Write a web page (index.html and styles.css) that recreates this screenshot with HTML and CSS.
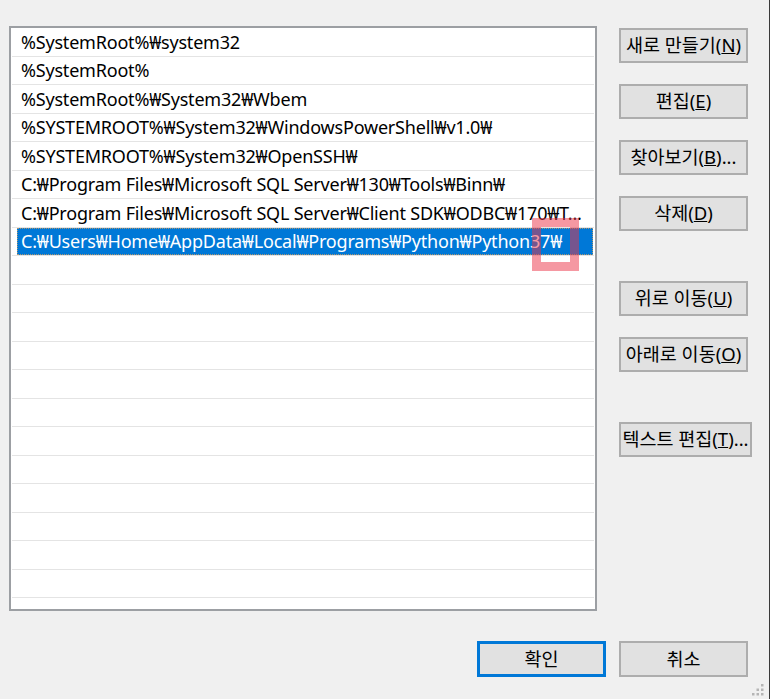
FILE: index.html
```html
<!DOCTYPE html>
<html lang="ko">
<head>
<meta charset="utf-8">
<title>환경 변수 편집</title>
<link rel="stylesheet" href="styles.css">
</head>
<body>
<div class="window">
  <div class="main">
    <div class="listbox">
      <div class="row"><span class="label">%SystemRoot%₩system32</span></div>
      <div class="row"><span class="label">%SystemRoot%</span></div>
      <div class="row"><span class="label">%SystemRoot%₩System32₩Wbem</span></div>
      <div class="row"><span class="label">%SYSTEMROOT%₩System32₩WindowsPowerShell₩v1.0₩</span></div>
      <div class="row"><span class="label">%SYSTEMROOT%₩System32₩OpenSSH₩</span></div>
      <div class="row"><span class="label">C:₩Program Files₩Microsoft SQL Server₩130₩Tools₩Binn₩</span></div>
      <div class="row"><span class="label">C:₩Program Files₩Microsoft SQL Server₩Client SDK₩ODBC₩170₩T...</span></div>
      <div class="row selected"><span class="label">C:₩Users₩Home₩AppData₩Local₩Programs₩Python₩Python37₩</span></div>
      <div class="row"><span class="label"></span></div>
      <div class="row"><span class="label"></span></div>
      <div class="row"><span class="label"></span></div>
      <div class="row"><span class="label"></span></div>
      <div class="row"><span class="label"></span></div>
      <div class="row"><span class="label"></span></div>
      <div class="row"><span class="label"></span></div>
      <div class="row"><span class="label"></span></div>
      <div class="row"><span class="label"></span></div>
      <div class="row"><span class="label"></span></div>
      <div class="row"><span class="label"></span></div>
      <div class="row"><span class="label"></span></div>
      <div class="row"><span class="label"></span></div>
      <div class="marker"></div>
    </div>
    <div class="side">
      <div class="group">
        <button class="btn">새로 만들기(<u>N</u>)</button>
        <button class="btn">편집(<u>E</u>)</button>
        <button class="btn">찾아보기(<u>B</u>)...</button>
        <button class="btn">삭제(<u>D</u>)</button>
      </div>
      <div class="group">
        <button class="btn">위로 이동(<u>U</u>)</button>
        <button class="btn">아래로 이동(<u>O</u>)</button>
      </div>
      <div class="group">
        <button class="btn wide">텍스트 편집(<u>T</u>)...</button>
      </div>
    </div>
  </div>
  <div class="footer">
    <button class="btn default">확인</button>
    <button class="btn">취소</button>
  </div>
  <svg class="grip" width="14" height="14" viewBox="0 0 14 14">
    <rect x="10" y="1" width="2.5" height="2.5" fill="#b5b5b5"/>
    <rect x="5.5" y="5.5" width="2.5" height="2.5" fill="#b5b5b5"/>
    <rect x="10" y="5.5" width="2.5" height="2.5" fill="#b5b5b5"/>
    <rect x="1" y="10" width="2.5" height="2.5" fill="#b5b5b5"/>
    <rect x="5.5" y="10" width="2.5" height="2.5" fill="#b5b5b5"/>
    <rect x="10" y="10" width="2.5" height="2.5" fill="#b5b5b5"/>
  </svg>
</div>
</body>
</html>
```
FILE: styles.css
```css
html, body {
  margin: 0;
  padding: 0;
  background: #f0f0f0;
}

.window {
  position: relative;
  width: 770px;
  height: 699px;
  box-sizing: border-box;
  border-right: 1px solid #3a3a3a;
  background: #f0f0f0;
  overflow: hidden;
  font-family: "Noto Sans", "Noto Sans CJK KR", sans-serif;
  font-size: 18px;
  color: #000;
}

.main {
  display: flex;
  align-items: flex-start;
  gap: 22px;
  padding: 26px 0 0 9px;
}

.listbox {
  position: relative;
  width: 588px;
  height: 585px;
  box-sizing: border-box;
  border: 2px solid #9c9fa3;
  background: #fff;
  padding: 0 1px;
  overflow: hidden;
}

.row {
  display: flex;
  height: 28.5px;
  box-sizing: border-box;
  border-bottom: 1px solid #e4e4e4;
  padding-left: 5px;
}

.label {
  flex: 1;
  display: flex;
  align-items: center;
  padding-left: 4px;
  white-space: nowrap;
  overflow: hidden;
  line-height: 1;
  letter-spacing: -0.2px;
}

.row.selected .label {
  background: #0078d7;
  color: #fff;
  outline: 1px dotted rgba(230, 160, 80, 0.75);
  outline-offset: -1px;
  margin-right: 1px;
}

.marker {
  position: absolute;
  left: 521px;
  top: 190px;
  width: 29px;
  height: 35px;
  border: 9px solid rgba(236, 50, 70, 0.5);
}

.side {
  display: flex;
  flex-direction: column;
  gap: 50px;
  margin-top: 2px;
}

.group {
  display: flex;
  flex-direction: column;
  gap: 21px;
}

.btn {
  width: 129px;
  height: 35px;
  box-sizing: border-box;
  border: 2px solid #adadad;
  background: #e1e1e1;
  font-family: inherit;
  font-size: 18.5px;
  color: #000;
  padding: 0;
  white-space: nowrap;
  display: flex;
  align-items: center;
  justify-content: center;
  line-height: 1;
}

.btn.wide {
  width: 133px;
}

.footer {
  display: flex;
  justify-content: flex-end;
  gap: 13px;
  margin-top: 30px;
  padding-right: 21px;
}

.footer .btn {
  height: 36px;
}

.btn.default {
  border: 2px solid #0078d7;
  box-shadow: inset 0 0 0 1px #0078d7;
}

.grip {
  position: absolute;
  right: 4px;
  bottom: 2px;
}
```
